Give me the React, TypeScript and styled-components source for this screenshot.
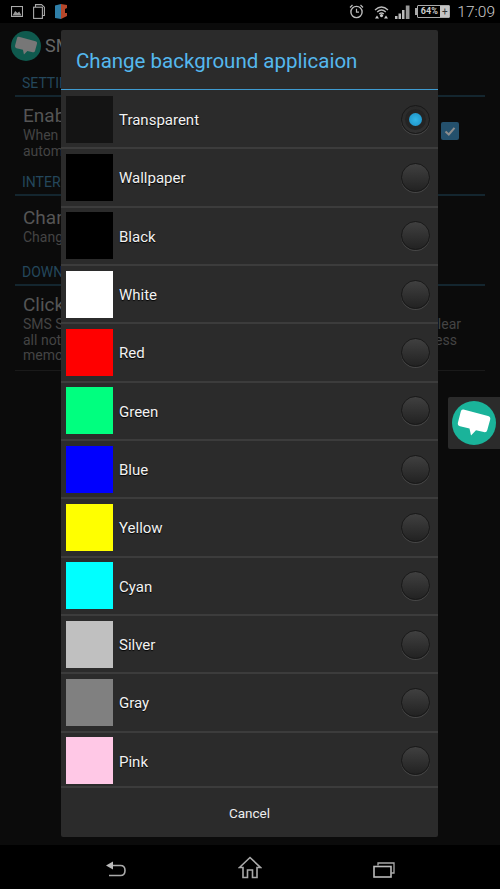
import styled, { createGlobalStyle } from "styled-components";

// Types
type Choice = {
  name: string;
  color: string;
};

// Data
const choices: Choice[] = [
  { name: "Transparent", color: "#141414" },
  { name: "Wallpaper", color: "#000000" },
  { name: "Black", color: "#000000" },
  { name: "White", color: "#ffffff" },
  { name: "Red", color: "#ff0000" },
  { name: "Green", color: "#00ff7f" },
  { name: "Blue", color: "#0000ff" },
  { name: "Yellow", color: "#ffff00" },
  { name: "Cyan", color: "#00ffff" },
  { name: "Silver", color: "#c0c0c0" },
  { name: "Gray", color: "#808080" },
  { name: "Pink", color: "#ffc8e6" },
];

const Bubble = ({ fill }: { fill: string }) => (
  <svg width="100%" height="100%" viewBox="0 0 44 44">
    <path
      d="M11.5 8.5 L36 15 Q38.8 15.8 38.2 18.5 L35.3 29 Q34.6 31.8 31.8 31.1 L24 29.3 L19 34.5 L17.5 27.5 L8 25.2 Q5.3 24.5 5.9 21.8 L8.8 10.5 Q9.3 8 11.5 8.5 Z"
      fill={fill}
    />
  </svg>
);

const App = () => {
  return (
    <Screen>
      <GlobalStyle />
      <StatusBar>
        <LeftIcons>
          <svg width="12" height="11" viewBox="0 0 12 11">
            <rect x="0.5" y="0.5" width="11" height="10" fill="none" stroke="#aaa" strokeWidth="1.1" />
            <path d="M1.5 9.5 L4.2 5 L6.4 7 L8.2 5.5 L10.5 9.5 Z" fill="#999" />
          </svg>
          <svg width="12" height="15" viewBox="0 0 12 15">
            <path d="M2.5 3 V0.6 H8.5 L11.4 3.2 V11.5 H9.5" fill="none" stroke="#aaa" strokeWidth="1.1" />
            <rect x="0.6" y="3.2" width="8.8" height="11.2" fill="none" stroke="#aaa" strokeWidth="1.1" />
          </svg>
          <svg width="12" height="15" viewBox="0 0 12 15">
            <path d="M0 1.5 L6 0 V15 L0 14 Z" fill="#2f7fa8" />
            <path d="M6 0 L12 1 V4 L10 5 V9 L12 9 V12 L6 15 Z" fill="#b5472a" />
          </svg>
        </LeftIcons>
        <RightIcons>
          <StatusIcon $after={3} width="15" height="15" viewBox="0 0 15 15">
            <circle cx="7.5" cy="8" r="5.6" fill="none" stroke="#bbb" strokeWidth="1.4" />
            <path d="M7.5 4.8 V8.2 H10 M1 3.5 L3.5 1 M14 3.5 L11.5 1" fill="none" stroke="#bbb" strokeWidth="1.2" />
          </StatusIcon>
          <StatusIcon $after={-1} width="15" height="14" viewBox="0 0 15 14">
            <path d="M1 5 Q7.5 -1 14 5 M3.2 7 Q7.5 3 11.8 7 M5.2 9 Q7.5 7 9.8 9" fill="none" stroke="#bbb" strokeWidth="1.3" />
            <circle cx="7.5" cy="10.6" r="1.6" fill="#ccc" />
            <path d="M1 13.5 L3 10.5 L5 13.5 Z M10 13.5 L12 10.5 L14 13.5 Z" fill="#ccc" />
          </StatusIcon>
          <StatusIcon $after={-2} width="15" height="14" viewBox="0 0 15 14">
            <path d="M0 14 V11 H2.5 V14 Z M3.5 14 V8.5 H6 V14 Z M7 14 V5 H9.5 V14 Z" fill="#bbb" />
            <path d="M10.8 14 V0.5 H14.5 V14 Z" fill="#999" />
          </StatusIcon>
          <Battery>
            <BatteryLevel>64%</BatteryLevel>
            <BatteryPlus>+</BatteryPlus>
          </Battery>
          <Clock>17:09</Clock>
        </RightIcons>
      </StatusBar>

      <AppArea>
        <AppBar>
          <AppIcon>
            <Bubble fill="#777777" />
          </AppIcon>
          <AppTitle>SMS</AppTitle>
        </AppBar>
        <Settings>
          <SectionHead>SETTINGS</SectionHead>
          <SettingRow $height={75} $top={7}>
            <SettingText>
              <SettingTitle>Enable</SettingTitle>
              <SettingNote>When active</SettingNote>
              <SettingNote>automatically</SettingNote>
            </SettingText>
            <CheckBox>
              <svg width="14" height="14" viewBox="0 0 14 14">
                <path d="M2.5 7.5 L5.8 10.5 L11.5 3.8" fill="none" stroke="#8c8c8c" strokeWidth="2" />
              </svg>
            </CheckBox>
          </SettingRow>
          <SectionHead>INTERFACE</SectionHead>
          <SettingRow $height={66} $top={10}>
            <SettingText>
              <SettingTitle>Change</SettingTitle>
              <SettingNote>Change</SettingNote>
            </SettingText>
          </SettingRow>
          <SectionHead>DOWNLOAD</SectionHead>
          <LastRow>
            <SettingTitle>Click</SettingTitle>
            <WideNote $end={16}>
              <span>SMS S</span>
              <span>clear</span>
            </WideNote>
            <WideNote $end={20}>
              <span>all noti</span>
              <span>less</span>
            </WideNote>
            <SettingNote>memor</SettingNote>
          </LastRow>
        </Settings>

        <Dialog>
          <DialogTitle>Change background applicaion</DialogTitle>
          <ChoiceList>
            {choices.map((choice) => (
              <ChoiceRow key={choice.name}>
                <Swatch $color={choice.color} />
                <ChoiceName>{choice.name}</ChoiceName>
                <Radio $on={choice.name === "Transparent"} />
              </ChoiceRow>
            ))}
          </ChoiceList>
          <CancelButton>Cancel</CancelButton>
        </Dialog>

        <FloatPanel>
          <FloatCircle>
            <Bubble fill="#ffffff" />
          </FloatCircle>
        </FloatPanel>
      </AppArea>

      <NavBar>
        <NavIcon $drop={3} width="22" height="18" viewBox="0 0 22 18">
          <path d="M8 5.5 H15.5 Q20 5.5 20 10.5 Q20 15.5 15.5 15.5 H4" fill="none" stroke="#aaa" strokeWidth="1.6" />
          <path d="M1 5.5 L8 1.5 V9.5 Z" fill="#bbb" />
        </NavIcon>
        <NavIcon $drop={0} width="24" height="23" viewBox="0 0 24 23">
          <path d="M1.5 11.5 L12 1.5 L22.5 11.5 H19 V21.5 H14.5 V14 H9.5 V21.5 H5 V11.5 Z" fill="none" stroke="#aaa" strokeWidth="1.6" />
        </NavIcon>
        <NavIcon $drop={5} width="22" height="16" viewBox="0 0 22 16">
          <path d="M5 3.5 V1 H21 V11 H18.5" fill="none" stroke="#aaa" strokeWidth="1.3" />
          <rect x="1" y="4.5" width="17" height="10.5" fill="none" stroke="#bbb" strokeWidth="1.6" />
        </NavIcon>
      </NavBar>
    </Screen>
  );
};

// Styles
const GlobalStyle = createGlobalStyle`
  html, body {
    margin: 0;
    padding: 0;
    background: #000;
  }
`;

const Screen = styled.div`
  width: 500px;
  height: 889px;
  display: flex;
  flex-direction: column;
  overflow: hidden;
  font-family: Roboto, "Liberation Sans", sans-serif;
`;

const StatusBar = styled.div`
  height: 23px;
  flex: none;
  display: flex;
  align-items: center;
  justify-content: space-between;
  padding: 0 5px 0 11px;
  background: #000;
`;

const LeftIcons = styled.div`
  display: flex;
  align-items: center;
  gap: 10px;
`;

const RightIcons = styled.div`
  display: flex;
  align-items: center;
  gap: 7px;
`;

const StatusIcon = styled.svg<{ $after: number }>`
  margin-right: ${(props) => props.$after}px;
`;

const Battery = styled.div`
  position: relative;
  width: 33px;
  height: 13px;
  margin-left: 2px;
  display: flex;
  align-items: stretch;
  border: 1px solid #aaa;
  box-sizing: border-box;
  border-radius: 1px;

  &::before {
    content: "";
    position: absolute;
    left: -3px;
    top: 2px;
    width: 2px;
    height: 7px;
    background: #aaa;
  }
`;

const BatteryLevel = styled.span`
  flex: 1;
  font-size: 9px;
  line-height: 11px;
  font-weight: 700;
  color: #ccc;
  text-align: center;
`;

const BatteryPlus = styled.span`
  width: 9px;
  background: #c4c4c4;
  color: #333;
  font-size: 10px;
  line-height: 11px;
  text-align: center;
`;

const Clock = styled.span`
  font-size: 15.5px;
  font-weight: 300;
  color: #ccc;
`;

const AppArea = styled.div`
  position: relative;
  flex: 1;
  background: #0b0b0b;
`;

const AppBar = styled.div`
  height: 50px;
  box-sizing: border-box;
  display: flex;
  align-items: center;
  gap: 4px;
  padding: 0 0 5px 11px;
`;

const AppIcon = styled.div`
  width: 30px;
  height: 30px;
  border-radius: 50%;
  background: #0f5a4e;
`;

const AppTitle = styled.span`
  font-size: 18px;
  color: #666;
`;

const Settings = styled.div`
  padding: 0 15px;
`;

const SectionHead = styled.div`
  height: 22px;
  line-height: 21px;
  font-size: 14px;
  padding-left: 7px;
  color: #24475c;
  border-bottom: 2px solid #14262f;
`;

const SettingRow = styled.div<{ $height: number; $top: number }>`
  display: flex;
  align-items: flex-start;
  justify-content: space-between;
  height: ${(props) => props.$height}px;
  padding: ${(props) => props.$top}px 0 0 8px;
  box-sizing: border-box;
`;

const SettingText = styled.div`
  display: flex;
  flex-direction: column;
`;

const SettingTitle = styled.div`
  font-size: 19px;
  line-height: 24px;
  color: #555;
`;

const SettingNote = styled.div`
  font-size: 14px;
  line-height: 15.5px;
  color: #444;
`;

const WideNote = styled(SettingNote)<{ $end: number }>`
  display: flex;
  justify-content: space-between;
  padding-right: ${(props) => props.$end}px;
`;

const LastRow = styled.div`
  padding: 7px 8px 6px;
  border-bottom: 1px solid #1a1a1a;
`;

const CheckBox = styled.div`
  width: 18px;
  height: 18px;
  display: flex;
  align-items: center;
  justify-content: center;
  margin: 18px 26px 0 0;
  border-radius: 2px;
  background: #24506c;
`;

const Dialog = styled.div`
  position: absolute;
  left: 61px;
  top: 7px;
  width: 377px;
  height: 807px;
  display: flex;
  flex-direction: column;
  background: #2b2b2b;
  border-radius: 2px;
`;

const DialogTitle = styled.div`
  height: 60px;
  flex: none;
  box-sizing: border-box;
  padding-left: 15px;
  line-height: 62px;
  font-size: 20.5px;
  color: #55b8ee;
  border-bottom: 1px solid #3f9bd0;
`;

const ChoiceList = styled.div`
  flex: 1;
  min-height: 0;
  overflow: hidden;
  padding-top: 1px;
  border-bottom: 2px solid #3c3c3c;
`;

const ChoiceRow = styled.div`
  height: 58.33px;
  box-sizing: border-box;
  display: flex;
  align-items: center;
  padding: 0 8px 0 5px;
  border-bottom: 2px solid #3c3c3c;
`;

const Swatch = styled.div<{ $color: string }>`
  width: 47px;
  height: 47px;
  flex: none;
  background: ${(props) => props.$color};
`;

const ChoiceName = styled.span`
  flex: 1;
  margin: 2px 0 0 6px;
  font-size: 15px;
  color: #f2f2f2;
  text-shadow: 0 1px 1px #000;
`;

const Radio = styled.div<{ $on: boolean }>`
  width: 27px;
  height: 27px;
  flex: none;
  display: flex;
  align-items: center;
  justify-content: center;
  border-radius: 50%;
  border: 1px solid #181818;
  box-shadow: 0 1px 0 #474747;
  background: ${(props) =>
    props.$on
      ? "linear-gradient(#2a2a2a, #303030)"
      : "linear-gradient(#404040, #222222)"};

  &::after {
    content: "";
    display: ${(props) => (props.$on ? "block" : "none")};
    width: 13px;
    height: 13px;
    border-radius: 50%;
    background: radial-gradient(#32b5e5, #1c8fc4);
    box-shadow: 0 0 0 4px #242424;
  }
`;

const CancelButton = styled.div`
  height: 49px;
  flex: none;
  display: flex;
  align-items: center;
  justify-content: center;
  font-size: 13.5px;
  color: #eee;
`;

const FloatPanel = styled.div`
  position: absolute;
  right: 0;
  top: 374px;
  width: 52px;
  height: 52px;
  display: flex;
  align-items: center;
  padding-left: 4px;
  box-sizing: border-box;
  background: #2b2b2b;
  border-radius: 2px 0 0 2px;
`;

const FloatCircle = styled.div`
  width: 44px;
  height: 44px;
  border-radius: 50%;
  background: #1ab39a;
`;

const NavBar = styled.div`
  height: 44px;
  flex: none;
  display: flex;
  align-items: center;
  justify-content: center;
  gap: 111px;
  background: #000;
`;

const NavIcon = styled.svg<{ $drop: number }>`
  margin-top: ${(props) => props.$drop}px;
`;

// Exports
export default App;
